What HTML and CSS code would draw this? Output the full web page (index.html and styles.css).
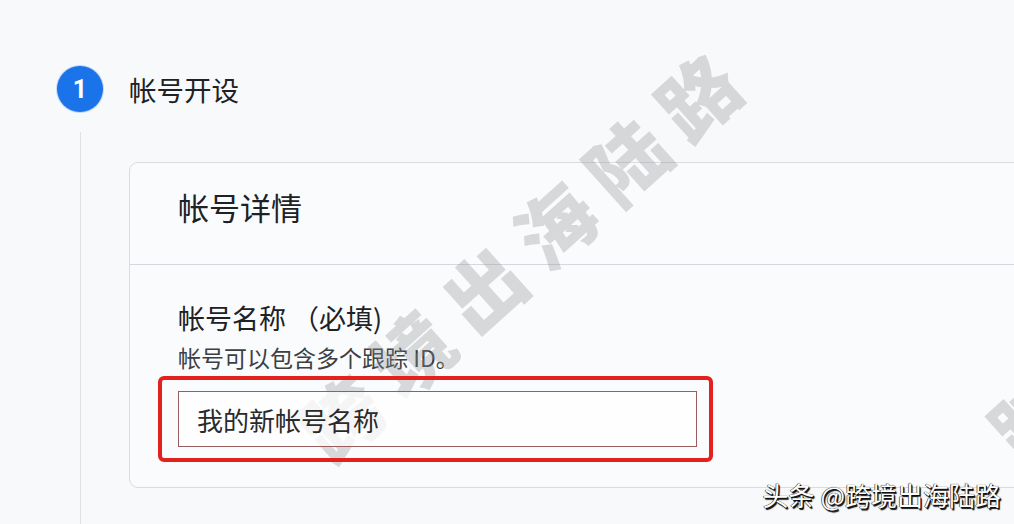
FILE: index.html
```html
<!DOCTYPE html>
<html lang="zh-CN">
<head>
<meta charset="utf-8">
<title>帐号开设</title>
<link rel="stylesheet" href="styles.css">
</head>
<body>
<div class="page">
  <div class="step-head">
    <div class="step-num">1</div>
    <div class="step-title">帐号开设</div>
  </div>
  <div class="step-body">
    <div class="card">
      <div class="card-head">帐号详情</div>
      <div class="card-body">
        <div class="label">帐号名称 （必填)</div>
        <div class="hint">帐号可以包含多个跟踪 ID。</div>
        <div class="highlight">
          <div class="input">我的新帐号名称</div>
        </div>
      </div>
    </div>
  </div>
  <div class="watermark wm-a">跨境出海陆路</div>
  <div class="watermark wm-b">跨境出海陆路</div>
  <div class="signature">头条 @跨境出海陆路</div>
</div>
</body>
</html>
```
FILE: styles.css
```css
* { box-sizing: border-box; }
html, body {
  margin: 0;
  padding: 0;
  background: #f8f9fb;
}
body {
  font-family: "Noto Sans CJK SC", "Noto Sans", Roboto, sans-serif;
  color: #202124;
  overflow: hidden;
}
.page {
  position: relative;
  width: 1014px;
  height: 524px;
  overflow: hidden;
  padding: 66px 0 0 57px;
}
.step-head {
  display: flex;
  align-items: center;
  gap: 26px;
}
.step-num {
  width: 46px;
  height: 46px;
  border-radius: 50%;
  background: #1a73e8;
  color: #fff;
  font-family: Roboto, "Noto Sans", sans-serif;
  font-weight: 700;
  font-size: 25px;
  display: flex;
  align-items: center;
  justify-content: center;
  box-shadow: 0 0 0 1px rgba(26,115,232,0.25);
}
.step-title {
  font-size: 27.5px;
  line-height: 40px;
}
.step-body {
  margin: 20px 0 0 23px;
  padding: 30px 0 0 48px;
  border-left: 1px solid #dfe1e5;
  height: 400px;
}
.card {
  width: 920px;
  border: 1px solid #d9dce1;
  border-radius: 9px;
  background: #fafbfd;
}
.card-head {
  padding: 24px 48px 37px;
  font-size: 31px;
  line-height: 40px;
  border-bottom: 1px solid #d5d9df;
}
.card-body {
  padding: 35px 48px 25px;
}
.label {
  font-size: 27px;
  line-height: 35px;
}
.hint {
  margin-top: 7px;
  font-size: 23px;
  line-height: 30px;
  color: #3c4043;
}
.highlight {
  position: relative;
  z-index: 2;
  margin: 4px 0 0 -20px;
  width: 555px;
  padding: 11px 12px 11px 16px;
  border: 4px solid #e3221d;
  border-radius: 6px;
}
.input {
  height: 56px;
  border: 1px solid #9a5d5d;
  background: rgba(255, 255, 255, 0.75);
  padding: 0 18px;
  display: flex;
  align-items: center;
  font-size: 26px;
  color: #2a2a2a;
}
.watermark {
  position: absolute;
  z-index: 1;
  top: 210px;
  width: 620px;
  text-align: center;
  font-size: 78px;
  line-height: 78px;
  font-weight: 900;
  letter-spacing: 18px;
  color: rgba(140, 142, 146, 0.32);
  transform: rotate(-42deg);
  white-space: nowrap;
  pointer-events: none;
}
.wm-a { left: 214px; }
.wm-b { left: 905px; }
.signature {
  position: absolute;
  z-index: 3;
  right: 13px;
  bottom: 14px;
  font-size: 26px;
  line-height: 30px;
  color: #fff;
  text-shadow: 1px 1px 0 #111, 1.5px 1.5px 1px #111, -0.5px -0.5px 0 #333, 0 0 1px #000;
}
```
